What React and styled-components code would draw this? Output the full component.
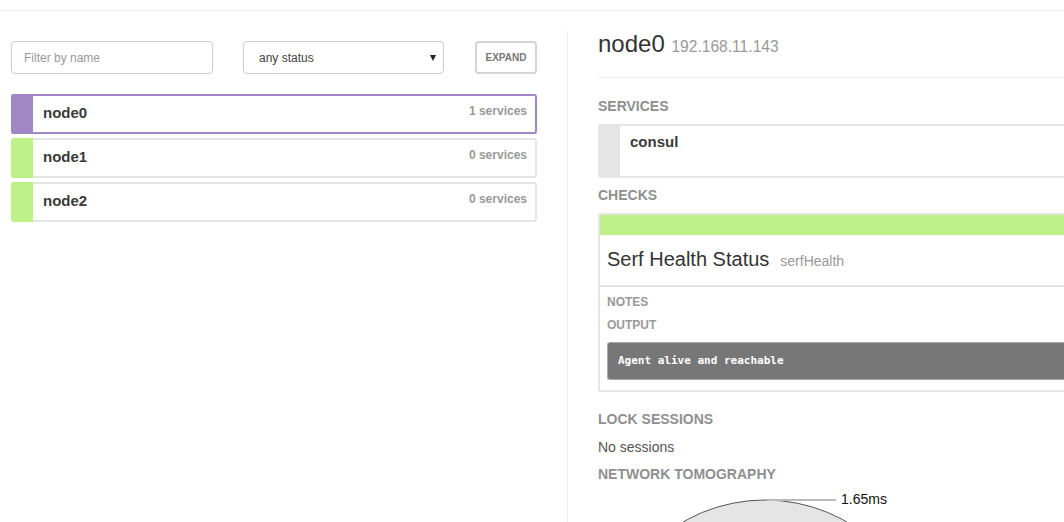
import styled, { createGlobalStyle } from "styled-components";

const Global = createGlobalStyle`
  html, body {
    margin: 0;
    padding: 0;
    background: #fff;
    overflow: hidden;
  }
  body {
    font-family: "Liberation Sans", Arial, sans-serif;
    color: #333;
  }
  * {
    box-sizing: border-box;
  }
`;

const TopBar = styled.div`
  height: 11px;
  border-bottom: 1px solid #eee;
`;

const Main = styled.div`
  display: grid;
  grid-template-columns: 526px 700px;
  column-gap: 30px;
  margin-top: 20px;
  padding-left: 11px;
  height: 491px;
`;

const LeftCol = styled.div`
  padding-top: 10px;
`;

const Filters = styled.div`
  display: grid;
  grid-template-columns: 232px 232px 62px;
  height: 33px;
`;

const Input = styled.input`
  width: 202px;
  height: 33px;
  border: 1px solid #ccc;
  border-radius: 4px;
  padding: 0 12px;
  font-family: inherit;
  font-size: 12px;
  color: #444;
  outline: none;
  &::placeholder {
    color: #999;
  }
`;

const SelectBox = styled.div`
  display: flex;
  align-items: center;
  width: 201px;
  height: 33px;
  border: 1px solid #ccc;
  border-radius: 4px;
  padding: 0 7px 0 15px;
`;

const Select = styled.select`
  flex: 1;
  appearance: none;
  border: none;
  background: transparent;
  font-family: inherit;
  font-size: 12px;
  color: #444;
  padding: 0;
  outline: none;
`;

const Caret = styled.span`
  width: 0;
  height: 0;
  border-left: 3px solid transparent;
  border-right: 3px solid transparent;
  border-top: 6px solid #222;
`;

const ExpandButton = styled.button`
  height: 33px;
  border: 2px solid #d4d4d4;
  border-radius: 4px;
  background: #fff;
  font-family: inherit;
  font-size: 10px;
  font-weight: bold;
  color: #777;
  padding: 0;
`;

const NodeList = styled.div`
  display: flex;
  flex-direction: column;
  gap: 4px;
  margin-top: 20px;
`;

const NodeRow = styled.div`
  display: flex;
  height: 40px;
  border: 2px solid ${(p) => (p.$active ? "#a287c7" : "#e5e5e5")};
  border-radius: 3px;
`;

const StatusBar = styled.div`
  width: 22px;
  margin: -2px 0 -2px -2px;
  border-radius: 3px 0 0 3px;
  background: ${(p) => p.$color};
`;

const NodeBody = styled.div`
  flex: 1;
  display: flex;
  justify-content: space-between;
  align-items: flex-start;
  padding: 7px 8px 0 10px;
`;

const NodeName = styled.span`
  font-size: 15px;
  font-weight: bold;
  line-height: 20px;
  color: #3a3a3a;
`;

const NodeCount = styled.span`
  font-size: 12px;
  font-weight: bold;
  line-height: 16px;
  color: #999;
`;

const RightCol = styled.div`
  border-left: 1px solid #eee;
  padding-left: 30px;
`;

const Header = styled.div`
  padding-bottom: 20px;
  border-bottom: 1px solid #eee;
`;

const Title = styled.h3`
  margin: 0;
  font-size: 24px;
  line-height: 26px;
  font-weight: normal;
  color: #333;
`;

const Sub = styled.small`
  font-size: 15.6px;
  line-height: 1;
  color: #999;
`;

const Heading = styled.h4`
  margin: ${(p) => p.$top}px 0 8px;
  font-size: 14px;
  line-height: 20px;
  font-weight: bold;
  color: #8f8f8f;
  text-transform: uppercase;
`;

const ServiceBox = styled.div`
  display: flex;
  height: 54px;
  border: 2px solid #e5e5e5;
  border-radius: 3px;
`;

const ServiceBar = styled.div`
  width: 20px;
  background: #e5e5e5;
`;

const ServiceName = styled.div`
  padding: 7px 10px;
  font-size: 15px;
  font-weight: bold;
  line-height: 18px;
  color: #3a3a3a;
`;

const CheckBox = styled.div`
  border: 2px solid #e5e5e5;
  border-radius: 3px;
`;

const CheckStatus = styled.div`
  height: 20px;
  background: ${(p) => p.$color};
`;

const CheckTitle = styled.div`
  padding: 12px 7px;
  font-size: 20px;
  line-height: 24px;
  color: #333;
  border-bottom: 2px solid #e5e5e5;
`;

const CheckId = styled.span`
  font-size: 14px;
  color: #999;
  margin-left: 11px;
`;

const CheckBody = styled.div`
  padding: 7px 0 10px 7px;
`;

const Label = styled.div`
  font-size: 12px;
  font-weight: bold;
  line-height: 17px;
  color: #999;
  text-transform: uppercase;
  margin-bottom: 6px;
`;

const Output = styled.pre`
  margin: 8px 0 0;
  height: 38px;
  padding: 10px;
  background: #777;
  border: 1px solid #aaa;
  border-right: none;
  border-radius: 3px 0 0 3px;
  color: #fff;
  font-family: "DejaVu Sans Mono", "Liberation Mono", monospace;
  font-size: 11px;
  font-weight: bold;
  line-height: 16px;
`;

const Muted = styled.p`
  margin: 0;
  font-size: 14px;
  line-height: 20px;
  color: #555;
`;

const Chart = styled.svg`
  display: block;
  overflow: visible;
`;

const nodes = [
  { name: "node0", count: 1, color: "#a287c7", active: true },
  { name: "node1", count: 0, color: "#bdf086" },
  { name: "node2", count: 0, color: "#bdf086" },
];

const App = () => {
  return (
    <>
      <Global />
      <TopBar />
      <Main>
        <LeftCol>
          <Filters>
            <Input placeholder="Filter by name" />
            <SelectBox>
              <Select defaultValue="any">
                <option value="any">any status</option>
                <option value="passing">passing</option>
                <option value="failing">failing</option>
              </Select>
              <Caret />
            </SelectBox>
            <ExpandButton>EXPAND</ExpandButton>
          </Filters>
          <NodeList>
            {nodes.map((n) => (
              <NodeRow key={n.name} $active={n.active}>
                <StatusBar $color={n.color} />
                <NodeBody>
                  <NodeName>{n.name}</NodeName>
                  <NodeCount>{n.count} services</NodeCount>
                </NodeBody>
              </NodeRow>
            ))}
          </NodeList>
        </LeftCol>

        <RightCol>
          <Header>
            <Title>
              node0 <Sub>192.168.11.143</Sub>
            </Title>
          </Header>

          <Heading $top={18}>Services</Heading>
          <ServiceBox>
            <ServiceBar />
            <ServiceName>consul</ServiceName>
          </ServiceBox>

          <Heading $top={7}>Checks</Heading>
          <CheckBox>
            <CheckStatus $color="#bdf086" />
            <CheckTitle>
              Serf Health Status<CheckId>serfHealth</CheckId>
            </CheckTitle>
            <CheckBody>
              <Label>Notes</Label>
              <Label>Output</Label>
              <Output>Agent alive and reachable</Output>
            </CheckBody>
          </CheckBox>

          <Heading $top={17}>Lock sessions</Heading>
          <Muted>No sessions</Muted>

          <Heading $top={7}>Network tomography</Heading>
          <Chart width="400" height="40">
            <circle cx="167" cy="172" r="164" fill="#e5e5e5" stroke="#555" strokeWidth="1" />
            <line x1="169" y1="8" x2="238" y2="8" stroke="#bbb" strokeWidth="2" />
            <text
              x="243"
              y="12"
              fontSize="14"
              fontFamily="Liberation Sans, Arial, sans-serif"
              fill="#111"
            >
              1.65ms
            </text>
          </Chart>
        </RightCol>
      </Main>
    </>
  );
};

export default App;
